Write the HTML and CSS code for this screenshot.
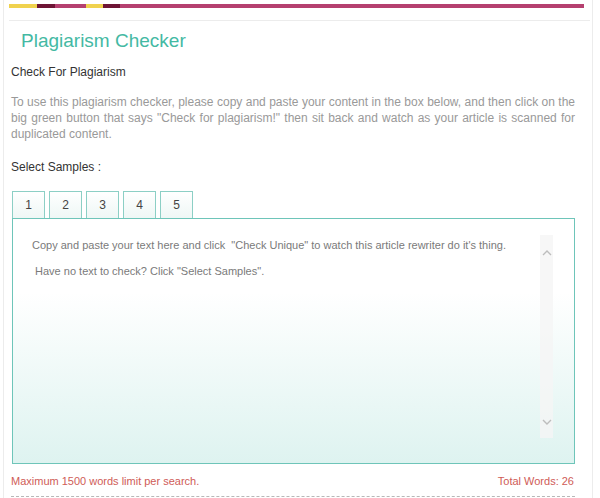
FILE: index.html
```html
<!DOCTYPE html>
<html lang="en">
<head>
<meta charset="utf-8">
<title>Plagiarism Checker</title>
<link rel="stylesheet" href="styles.css">
</head>
<body>
<div class="frame">
  <div class="ribbon">
    <span class="seg seg-yellow w28"></span>
    <span class="seg seg-dark w18"></span>
    <span class="seg seg-pink w31"></span>
    <span class="seg seg-yellow w17"></span>
    <span class="seg seg-dark w17"></span>
    <span class="seg seg-pink grow"></span>
  </div>
  <div class="rule"></div>

  <section class="panel">
    <h1 class="title">Plagiarism Checker</h1>
    <h2 class="subtitle">Check For Plagiarism</h2>
    <p class="intro">To use this plagiarism checker, please copy and paste your content in the box below, and then click on the big green button that says "Check for plagiarism!" then sit back and watch as your article is scanned for duplicated content.</p>
    <div class="label">Select Samples :</div>

    <div class="tabs">
      <button class="tab">1</button>
      <button class="tab">2</button>
      <button class="tab">3</button>
      <button class="tab">4</button>
      <button class="tab">5</button>
    </div>

    <div class="editor">
      <div class="editor-text">
        <p class="line">Copy and paste your text here and click  "Check Unique" to watch this article rewriter do it's thing.</p>
        <p class="line line-second"> Have no text to check? Click "Select Samples".</p>
      </div>
      <div class="scrollbar">
        <svg class="chev" width="10" height="6" viewBox="0 0 10 6"><path d="M1 5 L5 1 L9 5" fill="none" stroke="#bdbdbd" stroke-width="1.4"/></svg>
        <svg class="chev" width="10" height="6" viewBox="0 0 10 6"><path d="M1 1 L5 5 L9 1" fill="none" stroke="#bdbdbd" stroke-width="1.4"/></svg>
      </div>
    </div>

    <div class="status">
      <span>Maximum 1500 words limit per search.</span>
      <span>Total Words: 26</span>
    </div>
    <div class="dashed"></div>
  </section>
</div>
</body>
</html>
```

FILE: styles.css
```css
* {
  box-sizing: border-box;
}

html, body {
  margin: 0;
  padding: 0;
  background: #ffffff;
}

body {
  font-family: "Liberation Sans", Arial, sans-serif;
  font-size: 12px;
  color: #333333;
  overflow: hidden;
}

.frame {
  margin-left: 3px;
  width: 590px;
  min-height: 498px;
  border-left: 1px solid #ececec;
  border-right: 1px solid #ececec;
  padding-top: 4px;
}

/* striped accent strip along the top */
.ribbon {
  display: flex;
  height: 4px;
  margin: 0 8px 0 5px;
}

.seg {
  display: block;
  height: 100%;
}

.seg-yellow { background: #f0d24e; }
.seg-dark { background: #6e1535; }
.seg-pink { background: #b5406f; }

.w28 { width: 28px; }
.w18 { width: 18px; }
.w31 { width: 31px; }
.w17 { width: 17px; }
.grow { flex: 1; }

.rule {
  height: 1px;
  background: #ececec;
  margin: 12px 2px 0 5px;
}

.panel {
  width: 564px;
  margin-left: 7px;
}

.title {
  margin: 9px 0 0 10px;
  font-size: 19px;
  line-height: 22px;
  font-weight: normal;
  color: #44b9a3;
}

.subtitle {
  margin: 12px 0 0 0;
  font-size: 12px;
  line-height: 16px;
  font-weight: normal;
  color: #333333;
}

.intro {
  margin: 14px 0 0 0;
  font-size: 12px;
  line-height: 16px;
  color: #999999;
  text-align: justify;
}

.label {
  margin-top: 17px;
  line-height: 16px;
  color: #333333;
}

.tabs {
  display: flex;
  gap: 4px;
  margin: 16px 0 0 1px;
}

.tab {
  width: 33px;
  height: 27px;
  padding: 0;
  border: 1px solid #8ccfc5;
  border-bottom: none;
  background: linear-gradient(#ffffff, #eef7f5);
  font-family: "Liberation Sans", Arial, sans-serif;
  font-size: 12px;
  color: #444444;
  line-height: 26px;
}

.editor {
  display: flex;
  height: 246px;
  margin-left: 1px;
  border: 1px solid #6ec5b9;
  background: linear-gradient(#ffffff 0%, #ffffff 30%, #def3f0 100%);
  padding: 16px 21px 25px 19px;
}

.editor-text {
  flex: 1;
  padding-top: 2px;
  font-size: 11px;
  color: #7a7a7a;
}

.line {
  margin: 0;
  line-height: 16px;
  white-space: pre-wrap;
}

.line-second {
  margin-top: 10px;
}

.scrollbar {
  width: 13px;
  background: rgba(245, 245, 245, 0.8);
  display: flex;
  flex-direction: column;
  justify-content: space-between;
  align-items: center;
  padding: 15px 0 13px;
}

.chev {
  display: block;
}

.status {
  display: flex;
  justify-content: space-between;
  margin-top: 9px;
  padding-right: 1px;
  font-size: 11px;
  line-height: 16px;
  color: #cf5c57;
}

.dashed {
  margin-top: 7px;
  border-top: 1px dashed #b8b8b8;
}
```
